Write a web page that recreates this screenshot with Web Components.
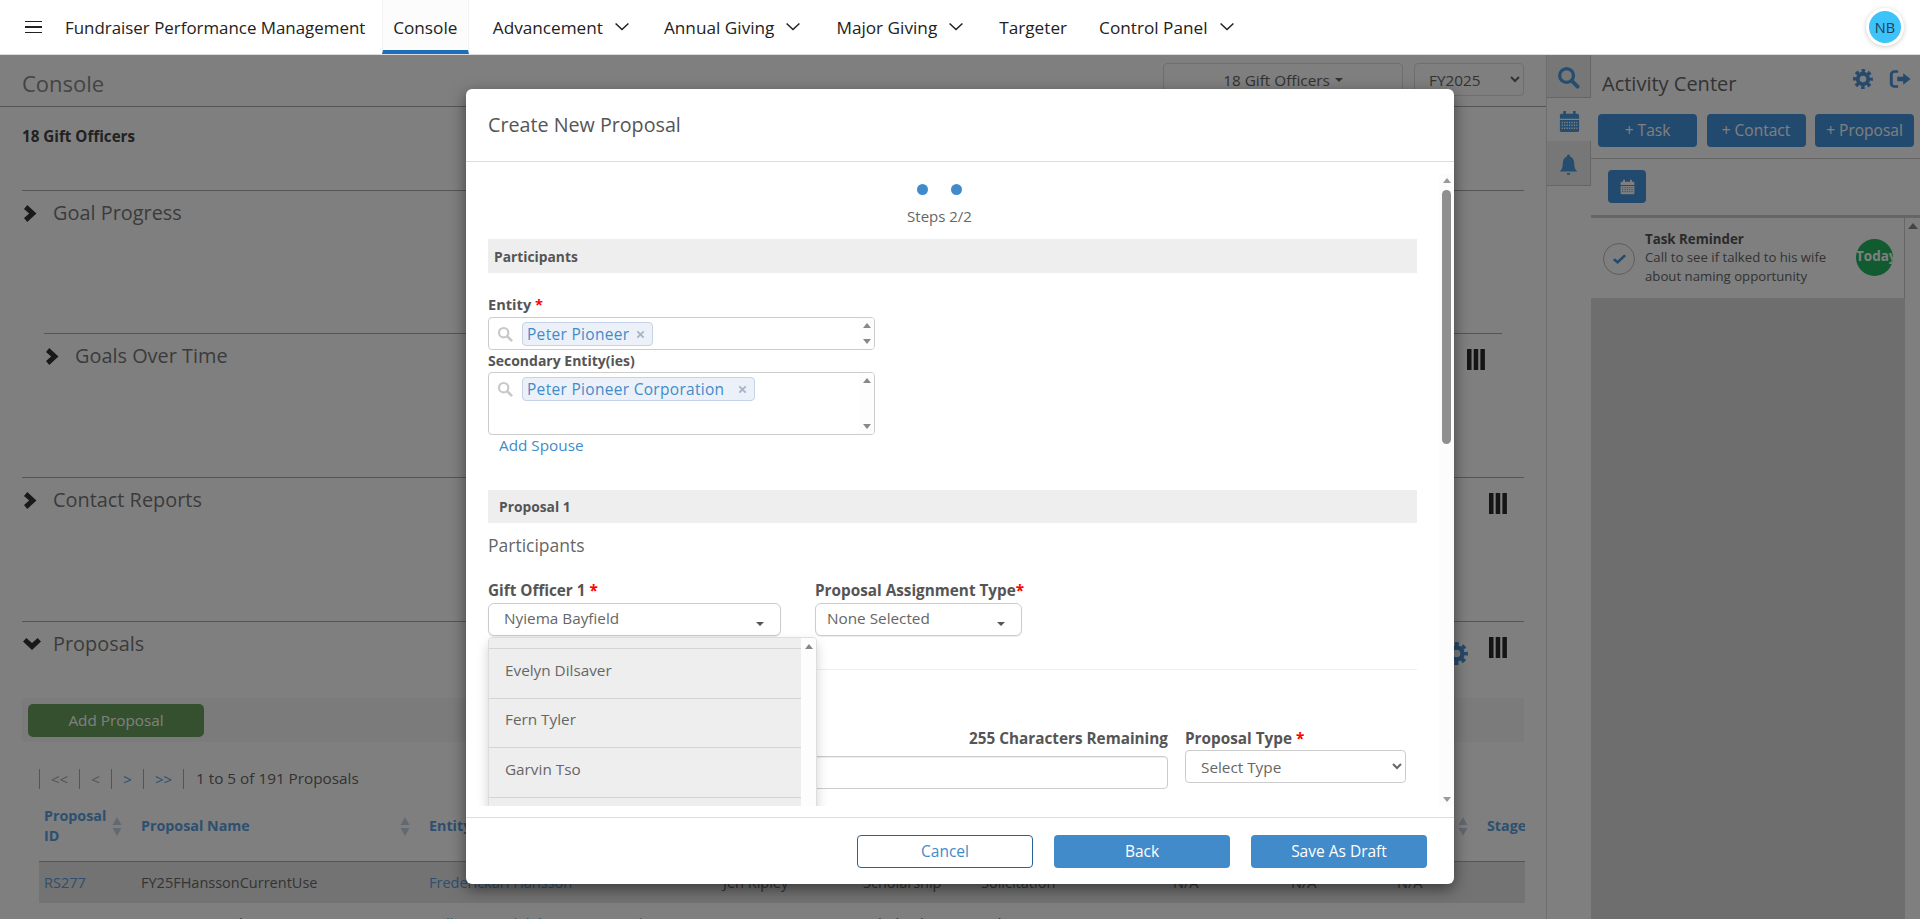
<!DOCTYPE html>
<html lang="en"><head><meta charset="utf-8"><title>Console</title>
<style>
html,body{margin:0;padding:0;height:919px;overflow:hidden;background:#fff;font-family:"Open Sans","Noto Sans",sans-serif}
</style></head><body>
<fp-app>
  <top-nav slot="nav"></top-nav>
  <console-page slot="main"></console-page>
  <activity-panel slot="side"></activity-panel>
  <proposal-modal slot="modal"></proposal-modal>
</fp-app>
<script>
const ICONS={
 gear:'<circle cx="12" cy="12" r="6.3" fill="none" stroke="currentColor" stroke-width="4.6"/><circle cx="12" cy="12" r="9.9" fill="none" stroke="currentColor" stroke-width="4" stroke-dasharray="4.2 3.58" stroke-dashoffset="2.1"/>',
 search:'<circle cx="10" cy="10" r="7.2" fill="none" stroke="currentColor" stroke-width="3.4"/><path d="M15.5 15.5L21.5 21.5" stroke="currentColor" stroke-width="4" stroke-linecap="round"/>',
 lens:'<circle cx="10" cy="10" r="7" fill="none" stroke="currentColor" stroke-width="3.2"/><path d="M15.5 15.5L21.5 21.5" stroke="currentColor" stroke-width="4" stroke-linecap="round"/>',
 calendar:'<path fill="currentColor" d="M5 1h3v3h8V1h3v3h2a2 2 0 0 1 2 2v3H1V6a2 2 0 0 1 2-2h2zM1 10.5h22V21a2 2 0 0 1-2 2H3a2 2 0 0 1-2-2z"/><path stroke="var(--dots,#fff)" stroke-width="1.5" stroke-dasharray="1.5 1.3" d="M3 13h18M3 16h18M3 19h18"/>',
 bell:'<path fill="currentColor" d="M12 1.500a1.700 1.700 0 0 1 1.700 1.900C17 4.300 18.600 7.300 18.600 11c0 4 1.200 5.600 3.600 7.600H1.800C4.200 16.600 5.400 15 5.400 11c0-3.700 1.600-6.700 4.900-7.600A1.700 1.700 0 0 1 12 1.500zM10 20h4a2 2 0 0 1-4 0z"/>',
 exit:'<path d="M10 3H6a3.500 3.500 0 0 0-3.500 3.500v11A3.500 3.500 0 0 0 6 21h4" fill="none" stroke="currentColor" stroke-width="3.200"/><path fill="currentColor" d="M9 9.300h6.500V5l8 7-8 7v-4.300H9z"/>',
 right:'<path fill="currentColor" d="M6 0L23 12 6 24 0 18.500 9.500 12 0 5.500z"/>',
 down:'<path fill="currentColor" d="M0 7L4.500 0 12 10 19.500 0 24 7 12 24z"/>',
 thin:'<path d="M1 5l11 12L23 5" fill="none" stroke="currentColor" stroke-width="2.400"/>',
 check:'<path d="M3 13l6 6L21 6" fill="none" stroke="currentColor" stroke-width="4.500"/>',
 close:'<path d="M5 5l14 14M19 5L5 19" stroke="currentColor" stroke-width="4"/>',
 columns:'<path fill="currentColor" d="M0 0h4.500v21H0zM6.700 0h4.500v21H6.700zM13.400 0h4.500v21h-4.500z"/>',
 sort:'<path fill="currentColor" d="M5 0l4.500 8H.5zM5 19l4.500-8H.5z"/>',
 caret:'<path fill="currentColor" d="M0 0h10L5 5z"/>',
 up:'<path fill="currentColor" d="M0 6L5 0l5 6z"/>',
 dn:'<path fill="currentColor" d="M0 0h10L5 6z"/>'
};
const BOX={columns:'0 0 18 21',sort:'0 0 10 19',caret:'0 0 10 5',up:'0 0 10 6',dn:'0 0 10 6'};
class FpIcon extends HTMLElement{
  connectedCallback(){
    if(this.shadowRoot)return;
    const n=this.getAttribute('name'),w=this.getAttribute('w')||16,h=this.getAttribute('h')||w;
    this.attachShadow({mode:'open'}).innerHTML=`<style>:host{display:inline-flex;flex:none;line-height:0}svg{display:block}</style><svg width="${w}" height="${h}" viewBox="${BOX[n]||'0 0 24 24'}" preserveAspectRatio="none">${ICONS[n]}</svg>`;
  }
}
customElements.define('fp-icon',FpIcon);
function el(name,css,html){
  customElements.define(name,class extends HTMLElement{
    constructor(){super();this.attachShadow({mode:'open'});}
    connectedCallback(){const a=typeof html==='function'?html(this):html;this.shadowRoot.innerHTML=`<style>${css}</style>${a}`;}
  });
}
el('fp-app',`:host{display:block;position:relative;width:1920px;height:919px;overflow:hidden}
 .body{display:flex;height:864px;overflow:hidden}
 .dim{position:absolute;left:0;right:0;top:55px;bottom:0;background:rgba(0,0,0,.5);z-index:10}`,
 `<slot name="nav"></slot><div class="body"><slot name="main"></slot><slot name="side"></slot></div><div class="dim"></div><slot name="modal"></slot>`);

el('nav-item',`:host{display:flex;align-items:center;height:54px;margin-right:var(--mr,33px);font-size:17.2px;color:#222;white-space:nowrap}
 fp-icon{margin-left:12px;color:#222}
 :host([active]){box-sizing:border-box;width:87px;justify-content:center;margin-right:24px;background:#fcfcfc;border-left:1px solid #f2f2f2;border-right:1px solid #f2f2f2;border-bottom:4px solid #1a6fb8;}
 :host([active]) .t{margin-top:4px}`,
 h=>`<span class="t"><slot></slot></span>${h.hasAttribute('caret')?'<fp-icon name="thin" w="14" h="12"></fp-icon>':''}`);

el('top-nav',`:host{display:flex;align-items:center;position:relative;z-index:20;height:54px;background:#fff;border-bottom:1px solid #ddd;padding-left:25px}
 .burger{display:flex;flex-direction:column;gap:4.200px;width:17px;margin-right:23px}
 .burger i{display:block;height:1.400px;background:#222}
 .brand{font-size:16.900px;color:#222;margin-right:16.500px;white-space:nowrap}
 .sp{flex:1}
 .ava{box-sizing:border-box;width:32px;height:32px;margin-right:19px;border-radius:50%;background:#3cc3f9;box-shadow:0 0 0 3px #fff,0 1px 5px 3px rgba(0,0,0,.2);display:flex;align-items:center;justify-content:center;font-size:14.500px;color:#1f3f55}`,
 `<div class="burger"><i></i><i></i><i></i></div><div class="brand">Fundraiser Performance Management</div>
  <nav-item active>Console</nav-item>
  <nav-item caret style="--mr:35px">Advancement</nav-item>
  <nav-item caret style="--mr:36px">Annual Giving</nav-item>
  <nav-item caret style="--mr:36px">Major Giving</nav-item>
  <nav-item style="--mr:32px">Targeter</nav-item>
  <nav-item caret>Control Panel</nav-item>
  <div class="sp"></div><div class="ava">NB</div>`);

el('fold-section',`:host{display:block;border-top:1px solid #aaa}
 .head{display:flex;align-items:flex-start;height:46px}
 .cw{width:31px;flex:none;display:flex}
 fp-icon.ch{color:#333}
 .t{font-size:19.900px;line-height:44px;flex:1;color:#777}
 ::slotted([slot=tools]){margin-top:15px;margin-right:17px}
 .body{display:block}`,
 h=>{const o=h.getAttribute('open')!==null;return `<div class="head"><div class="cw"><fp-icon class="ch" name="${o?'down':'right'}" w="${o?18:13}" h="${o?12:17}" style="margin:${o?'16px 0 0 1px':'14px 0 0 2px'}"></fp-icon></div><span class="t">${h.getAttribute('label')||''}</span><slot name="tools"></slot></div><div class="body"><slot></slot></div>`});

el('pager-bar',`:host{display:flex;align-items:center;height:20px;margin:27px 0 0 17px;font-size:15.300px;color:#666}
 span.b{box-sizing:border-box;display:flex;align-items:center;justify-content:center;height:20px;border-left:1px solid #aaa;color:#aaa;font-size:15px}
 .e{border-left:1px solid #aaa;height:20px;margin-right:12px}
 .x{padding-bottom:3px}`,
 `<span class="b" style="width:40px">&lt;&lt;</span><span class="b" style="width:32px">&lt;</span><span class="b" style="width:32px;color:#5a9de0">&gt;</span><span class="b" style="width:40px;color:#5a9de0">&gt;&gt;</span><span class="e"></span><span class="x">1 to 5 of 191 Proposals</span>`);

const COLS='97px 288px 294px 140px 118px 192px 118px 106px 90px 43px';
el('data-table',`:host{display:block;margin:17px 0 0 17px;width:1486px;font-size:14.500px;overflow:hidden}
 .row{display:grid;grid-template-columns:${COLS}}
 .hd{height:55px;border-bottom:1px solid #aaa;font-weight:700;font-size:14.300px;color:#5a9fe0;line-height:20px;align-items:start}
 .hd>div{height:40px;padding-left:5px;display:flex;align-items:center;justify-content:space-between;box-sizing:border-box;padding-right:14px;min-width:0;white-space:nowrap}
 .hd>div:last-child{padding-right:0}
 fp-icon{color:#c6d3e0}
 .r{height:41px;line-height:41px;color:#666}
 .r>div{padding-left:5px;white-space:nowrap;overflow:hidden}
 .r.on{background:#e6e6e6}
 a{color:#5a9fe0;text-decoration:none}`,
 `<div class="row hd">
   <div><span>Proposal<br>ID</span><fp-icon name="sort" w="10" h="19"></fp-icon></div>
   <div><span>Proposal Name</span><fp-icon name="sort" w="10" h="19"></fp-icon></div>
   <div><span>Entity</span></div><div></div><div></div><div></div><div></div><div></div>
   <div style="justify-content:flex-end"><fp-icon name="sort" w="10" h="19"></fp-icon></div>
   <div><span>Stage</span></div>
  </div>
  <div class="row r on"><div><a>RS277</a></div><div>FY25FHanssonCurrentUse</div><div><a>Frederickarl Hansson</a></div><div>Jen Ripley</div><div>Scholarship</div><div>Solicitation</div><div>N/A</div><div>N/A</div><div>N/A</div><div></div></div>
  <div class="row r"><div><a>RS276</a></div><div>FY25 Hearst Edu 2021S</div><div><a>William Randolph Hearst Foundation</a></div><div>Jason Gray</div><div>Scholarship</div><div>Solicitation</div><div>N/A</div><div>N/A</div><div>N/A</div><div></div></div>`);

el('console-page',`:host{display:block;box-sizing:border-box;width:1547px;height:864px;border-right:1px solid #ddd;overflow:hidden}
 .top{display:flex;align-items:center;height:51px;border-bottom:1px solid #aaa;padding:0 22px;box-sizing:content-box}
 h1{flex:1;margin:0;font-weight:400;font-size:22px;color:#888;margin-top:5px}
 .dd{box-sizing:border-box;width:240px;height:33px;border:1px solid #ddd;border-radius:4px;margin-right:11px;margin-top:-2px;display:flex;align-items:center;justify-content:center;font-size:15.300px;color:#666;gap:5px}
 select{box-sizing:border-box;width:110px;height:33px;margin-top:-2px;border:1px solid #ddd;border-radius:4px;background:#fff;color:#666;font:15.300px "Open Sans",sans-serif;padding-left:10px}
 .who{height:83px;padding:0 22px;font-weight:700;font-size:15.200px;color:#444;line-height:58px}
 .wrap{margin:0 22px}
 .goals{margin:96px 22px 0}
 .p{height:97px}
 .band{box-sizing:border-box;height:44px;margin-top:30px;padding:6px;background:#f6f6f6}
 .add{box-sizing:border-box;width:176px;height:33px;border-radius:5px;background:#6aa05e;color:#fff;font-size:15.300px;display:flex;align-items:center;justify-content:center;padding-bottom:2px}`,
 `<div class="top"><h1>Console</h1><div class="dd">18 Gift Officers <fp-icon name="caret" w="8" h="4"></fp-icon></div><select><option>FY2025</option></select></div>
  <div class="who">18 Gift Officers</div>
  <div class="wrap">
   <fold-section label="Goal Progress">
     <div class="goals"><fold-section label="Goals Over Time"><fp-icon slot="tools" name="columns" w="18" h="21" style="color:#2b2b2b"></fp-icon><div class="p"></div></fold-section></div>
   </fold-section>
   <fold-section label="Contact Reports"><fp-icon slot="tools" name="columns" w="18" h="21" style="color:#2b2b2b"></fp-icon><div class="p"></div></fold-section>
   <fold-section label="Proposals" open>
     <fp-icon slot="tools" name="gear" w="23" h="23" style="color:#4a94d8;margin-right:21px;margin-top:20px"></fp-icon>
     <fp-icon slot="tools" name="columns" w="18" h="21" style="color:#2b2b2b"></fp-icon>
     <div class="band"><div class="add">Add Proposal</div></div>
     <pager-bar></pager-bar>
     <data-table></data-table>
   </fold-section>
  </div>`);

el('activity-panel',`:host{display:flex;width:373px;height:864px;overflow:hidden;font-size:14px}
 .tabs{box-sizing:border-box;width:44px;flex:none}
 .tab{box-sizing:border-box;display:flex;justify-content:center;align-items:flex-start;color:#4a9ae0}
 .tab.off{background:#eee;border-right:1px solid #ccc;border-bottom:1px solid #ccc}
 .main{flex:1;min-width:0;display:flex;flex-direction:column}
 .hd{display:flex;height:59px;padding:0 9px 0 11px;box-sizing:border-box;align-items:flex-start}
 .hd b{flex:1;font-weight:400;font-size:20px;color:#666;line-height:58px}
 .btns{display:flex;gap:9.500px;margin-left:7px;height:33px}
 .btn{box-sizing:border-box;width:99px;height:33px;border-radius:4px;background:#4594dc;color:#fff;display:flex;align-items:center;justify-content:center;font-size:15.500px;padding-bottom:2px}
 .cal{height:56px;margin-top:11px;border-top:1px solid #ccc;border-bottom:3px solid #ccc}
 .cal div{box-sizing:border-box;width:38px;height:33px;margin:11px 0 0 17px;background:#4594dc;border-radius:4px;display:flex;align-items:center;justify-content:center;color:#fff;--dots:#4594dc}
 .list{flex:1;display:flex;min-height:0}
 .col{width:314px;background:#ddd;flex:none}
 .card{box-sizing:border-box;height:80px;background:#fff;border-right:1px solid #ccc;display:flex;align-items:center;padding:0 10px 0 12px}
 .ok{box-sizing:border-box;width:32px;height:32px;border:1px solid #bbb;border-radius:50%;display:flex;align-items:center;justify-content:center;color:#4a94d8;margin-right:10px;flex:none;margin-top:1px}
 .tx{flex:1;font-size:13.200px;line-height:19px;color:#666;white-space:nowrap}
 .tx strong{display:block;color:#555;line-height:18px;font-size:13.300px}
 .today{box-sizing:border-box;width:37px;height:37px;border-radius:50%;background:#25b45f;color:#fff;font-weight:700;font-size:13.500px;line-height:34px;text-align:center;overflow:hidden;flex:none;margin-top:-1px;margin-right:1px}
 .rail{flex:1;display:flex;justify-content:center;padding-top:5px;color:#888}`,
 `<div class="tabs">
    <div class="tab off" style="height:43px;padding-top:11px"><fp-icon name="search" w="23" h="23"></fp-icon></div>
    <div class="tab" style="height:43px;padding-top:12px"><fp-icon name="calendar" w="21" h="23"></fp-icon></div>
    <div class="tab off" style="height:45px;padding-top:12px"><fp-icon name="bell" w="21" h="24"></fp-icon></div>
  </div>
  <div class="main">
    <div class="hd"><b>Activity Center</b><fp-icon name="gear" w="20" h="20" style="color:#4a94d8;margin:14px 16px 0 0"></fp-icon><fp-icon name="exit" w="22" h="20" style="color:#4a94d8;margin-top:14px"></fp-icon></div>
    <div class="btns"><div class="btn">+ Task</div><div class="btn">+ Contact</div><div class="btn">+ Proposal</div></div>
    <div class="cal"><div><fp-icon name="calendar" w="15" h="16"></fp-icon></div></div>
    <div class="list"><div class="col"><div class="card">
       <div class="ok"><fp-icon name="check" w="15" h="13"></fp-icon></div>
       <div class="tx"><strong>Task Reminder</strong>Call to see if talked to his wife<br>about naming opportunity</div>
       <div class="today">Today</div>
    </div></div><div class="rail"><fp-icon name="up" w="10" h="6"></fp-icon></div></div>
  </div>`);

el('section-bar',`:host{display:flex;box-sizing:border-box;align-items:center;height:var(--bh,34px);background:#eee;font-weight:700;font-size:13.800px;color:#555;padding-left:var(--pl,6px);padding-bottom:var(--pb,0)}`,`<slot></slot>`);
el('field-label',`:host{display:block;font-weight:700;font-size:var(--fs,15.300px);color:#555;line-height:22px;white-space:nowrap}
 i{font-style:normal;color:#f00}`,h=>`<slot></slot>${h.hasAttribute('req')?`<i>${h.getAttribute('req')==='tight'?'':' '}*</i>`:''}`);
el('tag-chip',`:host{display:inline-flex;box-sizing:border-box;align-items:center;height:24px;padding:0 6px 0 4px;background:#ecf1f9;border:1px solid #c6d2e8;border-radius:4px;font-size:15.500px;color:#428bca;white-space:nowrap;letter-spacing:.3px}
 fp-icon{color:#a8b3c6;margin-left:var(--xg,6px)}`,`<slot></slot><fp-icon name="close" w="11" h="11"></fp-icon>`);
el('tag-input',`:host{display:flex;box-sizing:border-box;width:387px;height:var(--h,33px);border:1px solid #ccc;border-radius:4px;overflow:hidden}
 fp-icon.s{color:#c8c8c8;margin:8px 9px 0 8px}
 .m{flex:1;padding-top:4px}
 .r{width:15px;background:#fdfdfd;display:flex;flex-direction:column;justify-content:space-between;align-items:center;padding:5px 0;color:#888;box-sizing:border-box}`,
 `<fp-icon class="s" name="lens" w="16" h="16"></fp-icon><div class="m"><slot></slot></div><div class="r"><fp-icon name="up" w="8" h="5"></fp-icon><fp-icon name="dn" w="8" h="5"></fp-icon></div>`);
el('drop-select',`:host{display:flex;box-sizing:border-box;align-items:center;height:33px;border:1px solid #ccc;border-radius:6px;box-shadow:0 1px 1px rgba(0,0,0,.08);font-size:15.300px;color:#666;padding:0 16px 3px var(--pl,15px);justify-content:space-between;white-space:nowrap;background:#fff}
 fp-icon{color:#555;margin-top:11px}`,`<slot></slot><fp-icon name="caret" w="8" h="4"></fp-icon>`);
el('drop-list',`:host{display:flex;position:absolute;left:0;top:57px;width:329px;height:210px;background:#fff;border:1px solid #ddd;border-radius:4px;box-shadow:0 6px 12px rgba(0,0,0,.18);z-index:5;box-sizing:border-box;overflow:hidden}
 .l{flex:1;background:#eee;font-size:15.300px;color:#666}
 .it{box-sizing:border-box;height:49.500px;border-bottom:1px solid #d4d4d4;display:flex;align-items:center;padding:0 0 7px 16px}
 .it.first{height:11px;padding:0}
 .r{width:15px;background:#fdfdfd;display:flex;justify-content:center;padding-top:6px;color:#888;box-sizing:border-box}`,
 `<div class="l"><div class="it first"></div><div class="it">Evelyn Dilsaver</div><div class="it">Fern Tyler</div><div class="it">Garvin Tso</div><div class="it"></div></div><div class="r"><fp-icon name="up" w="8" h="5"></fp-icon></div>`);
el('scroll-rail',`:host{display:flex;flex-direction:column;align-items:center;box-sizing:border-box;width:15px;flex:none;margin-top:12px;background:#fcfcfc;color:#999;padding:4px 0}
 .th{width:9px;height:254px;margin-top:7px;background:#8f8f8f;border-radius:5px}
 .sp{flex:1}`,`<fp-icon name="up" w="8" h="5"></fp-icon><div class="th"></div><div class="sp"></div><fp-icon name="dn" w="8" h="5"></fp-icon>`);
el('modal-button',`:host{display:flex;box-sizing:border-box;align-items:center;justify-content:center;width:176px;height:33px;border-radius:4px;background:#428bca;color:#fff;font-size:15.500px;margin-left:21px;padding-bottom:2px}
 :host([ghost]){background:#fff;color:#428bca;border:1px solid #2a6496;margin-left:0}`,`<slot></slot>`);

el('proposal-modal',`:host{position:absolute;left:466px;top:89px;width:988px;height:795px;z-index:30;background:#fff;border-radius:6px;box-shadow:0 5px 15px rgba(0,0,0,.5);display:flex;flex-direction:column;overflow:hidden}
 .hd{box-sizing:border-box;height:73px;border-bottom:1px solid #ddd;padding:0 22px;font-size:19.700px;color:#555;line-height:72px}
 .body{flex:none;height:644px;display:flex;overflow:hidden}
 .sc{flex:1;min-width:0;padding:0 22px;box-sizing:border-box;position:relative}
 .in{width:929px}
 .steps{text-align:center;padding:22px 26px 0 0;color:#666;font-size:15px;height:77px;box-sizing:border-box}
 .dots{display:flex;justify-content:center;gap:23px;height:11px;margin-bottom:11px}
 .dots i{width:11px;height:11px;border-radius:50%;background:#428bca}
 .lab1{margin-top:21px;line-height:20px;padding-bottom:3px;--fs:14.600px}
 .add{display:block;color:#428bca;font-size:15.300px;line-height:20px;padding-left:11px;margin-bottom:35px}
 .sub{margin-top:11px;font-size:17.500px;color:#666;line-height:22px}
 .row{display:flex;margin-top:24px}
 .row>div{position:relative}
 .row field-label{line-height:21px;padding-bottom:2px}
 hr{border:0;border-top:1px solid #eee;margin:33px 0 58px}
 .row2{display:flex;gap:17px}
 .row2 field-label{line-height:20px;padding-bottom:2px}
 .c1{width:680px}
 .c1 .rem{text-align:right;padding-bottom:8px}
 .c1 .inp{box-sizing:border-box;height:33px;border:1px solid #ccc;border-radius:4px;box-shadow:inset 0 1px 1px rgba(0,0,0,.075)}
 select{display:block;box-sizing:border-box;width:221px;height:33px;border:1px solid #ccc;border-radius:4px;background:#fff;color:#666;font:15.300px "Open Sans",sans-serif;padding-left:11px}
 .ft{flex:1;border-top:1px solid #ddd;margin-top:11px;display:flex;justify-content:flex-end;align-items:flex-start;padding:17px 27px 0 0}`,
 `<div class="hd">Create New Proposal</div>
  <div class="body">
   <div class="sc"><div class="in">
    <div class="steps"><div class="dots"><i></i><i></i></div>Steps 2/2</div>
    <section-bar>Participants</section-bar>
    <field-label class="lab1" req>Entity</field-label>
    <tag-input><tag-chip>Peter Pioneer</tag-chip></tag-input>
    <field-label style="--fs:14px">Secondary Entity(ies)</field-label>
    <tag-input style="--h:63px"><tag-chip style="--xg:13px">Peter Pioneer Corporation</tag-chip></tag-input>
    <span class="add">Add Spouse</span>
    <section-bar style="--pl:11px;--pb:1px;--bh:33px">Proposal 1</section-bar>
    <div class="sub">Participants</div>
    <div class="row">
      <div style="width:293px;margin-right:34px"><field-label req>Gift Officer 1</field-label><drop-select>Nyiema Bayfield</drop-select><drop-list></drop-list></div>
      <div style="width:207px"><field-label req="tight">Proposal Assignment Type</field-label><drop-select style="--pl:11px">None Selected</drop-select></div>
    </div>
    <hr>
    <div class="row2">
      <div class="c1"><field-label class="rem">255 Characters Remaining</field-label><div class="inp"></div></div>
      <div><field-label req>Proposal Type</field-label><select><option>Select Type</option></select></div>
    </div>
   </div></div>
   <scroll-rail></scroll-rail>
  </div>
  <div class="ft"><modal-button ghost>Cancel</modal-button><modal-button>Back</modal-button><modal-button>Save As Draft</modal-button></div>`);
</script>
</body></html>
